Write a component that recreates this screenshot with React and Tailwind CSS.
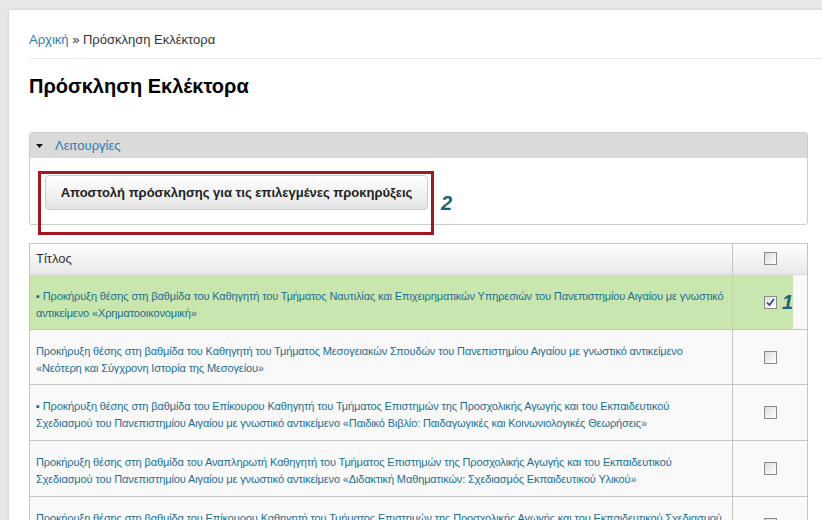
import React from "react";

const rows = [
  {
    lines: [
      "▪ Προκήρυξη θέσης στη βαθμίδα του Καθηγητή του Τμήματος Ναυτιλίας και Επιχειρηματικών Υπηρεσιών του Πανεπιστημίου Αιγαίου με γνωστικό",
      "αντικείμενο «Χρηματοοικονομική»",
    ],
    checked: true,
  },
  {
    lines: [
      "Προκήρυξη θέσης στη βαθμίδα του Καθηγητή του Τμήματος Μεσογειακών Σπουδών του Πανεπιστημίου Αιγαίου με γνωστικό αντικείμενο",
      "«Νεότερη και Σύγχρονη Ιστορία της Μεσογείου»",
    ],
  },
  {
    lines: [
      "▪ Προκήρυξη θέσης στη βαθμίδα του Επίκουρου Καθηγητή του Τμήματος Επιστημών της Προσχολικής Αγωγής και του Εκπαιδευτικού",
      "Σχεδιασμού του Πανεπιστημίου Αιγαίου με γνωστικό αντικείμενο «Παιδικό Βιβλίο: Παιδαγωγικές και Κοινωνιολογικές Θεωρήσεις»",
    ],
    tall: true,
  },
  {
    lines: [
      "Προκήρυξη θέσης στη βαθμίδα του Αναπληρωτή Καθηγητή του Τμήματος Επιστημών της Προσχολικής Αγωγής και του Εκπαιδευτικού",
      "Σχεδιασμού του Πανεπιστημίου Αιγαίου με γνωστικό αντικείμενο «Διδακτική Μαθηματικών: Σχεδιασμός Εκπαιδευτικού Υλικού»",
    ],
    tall: true,
  },
  {
    lines: [
      "Προκήρυξη θέσης στη βαθμίδα του Επίκουρου Καθηγητή του Τμήματος Επιστημών της Προσχολικής Αγωγής και του Εκπαιδευτικού Σχεδιασμού",
      "του Πανεπιστημίου Αιγαίου με γνωστικό αντικείμενο «Ψυχολογία»",
    ],
    tall: true,
  },
];

function Checkbox({ checked }) {
  return (
    <div className="relative w-[13px] h-[13px] border border-[#8a8a8a] bg-[linear-gradient(135deg,#dcdcdc,#ffffff)] box-border">
      {checked && (
        <svg className="absolute left-[1px] top-[1px]" width="9" height="9" viewBox="0 0 9 9">
          <path d="M1 4.5 L3.5 7 L8 1" fill="none" stroke="#2f3d8c" strokeWidth="1.6" />
        </svg>
      )}
    </div>
  );
}

export default function App() {
  return (
    <div
      className="w-[822px] h-[520px] overflow-hidden bg-[#e7e7e7] pt-[10px] pl-[9px]"
      style={{ fontFamily: '"Liberation Sans", Arial, sans-serif' }}
    >
      <div className="relative bg-white h-[520px] pl-[20px] pr-[14px] shadow-[0_0_3px_rgba(0,0,0,0.15)]">
        {/* breadcrumb */}
        <div className="pt-[22px] pb-[10px] text-[13px] leading-[16px] text-[#333]">
          <span className="text-[#2a7ab4]">Αρχική</span> » Πρόσκληση Εκλέκτορα
        </div>
        <div className="h-px bg-[#ececec] -mr-[14px]" />
        <h1 className="mt-[15px] text-[20px] leading-[24px] font-bold text-black">Πρόσκληση Εκλέκτορα</h1>

        {/* Operations panel */}
        <div className="mt-[34px] border border-[#cccccc] rounded-[3px] overflow-hidden">
          <div className="h-[25px] bg-[#dadada] flex items-center pl-[6px]">
            <svg width="7" height="4" viewBox="0 0 7 4" className="mr-[12px]">
              <path d="M0 0 L7 0 L3.5 4 Z" fill="#111" />
            </svg>
            <span className="text-[13px] text-[#2a7ab4]">Λειτουργίες</span>
          </div>
          <div className="h-[66px] pt-[17px] pl-[15px]">
            <div className="w-[383px] h-[35px] rounded-[4px] border border-[#cccccc] bg-[linear-gradient(#ffffff,#e4e4e4)] flex items-center justify-center text-[13px] font-bold text-[#222]">
              Αποστολή πρόσκλησης για τις επιλεγμένες προκηρύξεις
            </div>
          </div>
        </div>

        {/* Table */}
        <div className="mt-[18px] border border-[#c4c4c4] border-b-0">
          <div className="flex h-[31px] bg-[linear-gradient(#ffffff,#e8e8e8)] border-b border-[#dcdcdc]">
            <div className="flex-1 flex items-center pl-[6px] text-[13px] text-[#333]">Τίτλος</div>
            <div className="w-[75px] border-l border-[#c4c4c4] flex justify-center pt-[8px]">
              <Checkbox />
            </div>
          </div>
          {rows.map((r, i) => (
            <div
              key={i}
              className={
                "flex border-b border-[#c4c4c4] " + (r.checked ? "bg-[#c9e6af]" : "bg-[#f9f9f9]")
              }
            >
              <div
                className={
                  "flex-1 pl-[6px] pt-[13px] text-[11px] leading-[17px] tracking-[-0.12px] text-[#1c6e91] whitespace-nowrap overflow-hidden " +
                  (r.tall ? "pb-[8px]" : "pb-[7px]")
                }
              >
                {r.lines.map((l, j) => (
                  <div key={j}>{l}</div>
                ))}
              </div>
              <div
                className={
                  "w-[75px] border-l flex items-center justify-center relative " +
                  (r.checked
                    ? "border-[#c2d9a5] bg-[linear-gradient(to_right,#c9e6af_60px,#f9f9f9_60px)]"
                    : "border-[#c4c4c4]")
                }
              >
                <Checkbox checked={r.checked} />
                {r.checked && (
                  <span className="absolute left-[49px] top-[12px] text-[20px] font-bold italic text-[#1b6475]">1</span>
                )}
              </div>
            </div>
          ))}
        </div>

        {/* annotation overlay */}
        <div className="absolute left-[29px] top-[161px] w-[396px] h-[64px] border-[3px] border-[#a3171e]" />
        <span className="absolute left-[432px] top-[178px] text-[20px] font-bold italic text-[#1b6475]">2</span>
      </div>
    </div>
  );
}
